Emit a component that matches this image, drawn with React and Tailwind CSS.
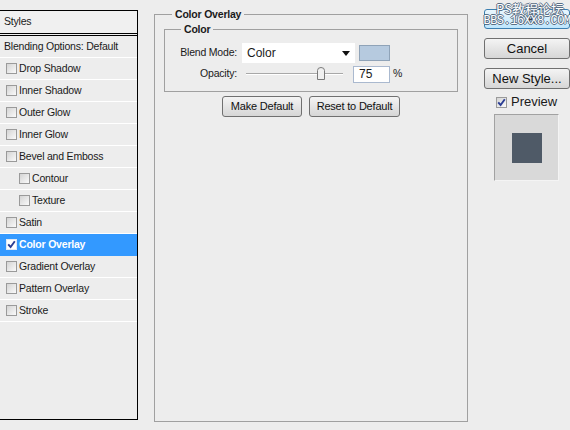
import React from "react";

const Box = ({ checked, light }) => (
  <span
    className={
      "w-[11px] h-[11px] border flex items-center justify-center shrink-0 " +
      (light
        ? "border-[#dfe8f5] bg-white"
        : "border-[#9a9a9a] bg-linear-to-br from-[#d4d4d4] to-[#fafafa]")
    }
  >
    {checked && (
      <svg width="9" height="9" viewBox="0 0 9 9">
        <path d="M1.2 4.3 L3.6 7 L7.8 1.3" stroke="#2a3d94" strokeWidth="1.9" fill="none" />
      </svg>
    )}
  </span>
);

const styleRows = [
  { label: "Drop Shadow" },
  { label: "Inner Shadow" },
  { label: "Outer Glow" },
  { label: "Inner Glow" },
  { label: "Bevel and Emboss" },
  { label: "Contour", indent: true },
  { label: "Texture", indent: true },
  { label: "Satin" },
  { label: "Color Overlay", active: true },
  { label: "Gradient Overlay" },
  { label: "Pattern Overlay" },
  { label: "Stroke" },
];

const GrayButton = ({ children, className = "" }) => (
  <button
    className={
      "h-[21px] border border-[#707070] rounded-[3px] bg-linear-to-b from-[#f4f4f4] to-[#d6d6d6] text-[#111] leading-none " +
      className
    }
  >
    {children}
  </button>
);

export default function App() {
  return (
    <div className="w-[570px] h-[430px] bg-[#ededed] flex font-['Liberation_Sans',Arial,sans-serif] text-[10.5px] tracking-[-0.2px] text-[#1a1a1a] overflow-hidden">
      {/* styles list */}
      <div className="mt-[10px] w-[138px] h-[410px] border-t border-r border-b border-black flex flex-col">
        <div className="h-[25px] shrink-0 flex items-center pl-[4px] bg-[#f0f0f0] border-b-[3px] border-double border-black">
          Styles
        </div>
        <div className="h-[22px] shrink-0 flex items-center pl-[4px] border-b border-white">
          Blending Options: Default
        </div>
        {styleRows.map((r) => (
          <div
            key={r.label}
            className={
              "h-[22px] shrink-0 flex items-center gap-[2px] border-b " +
              (r.indent ? "pl-[19px] " : "pl-[6px] ") +
              (r.active ? "bg-[#3399ff] text-white font-bold border-[#3399ff]" : "border-white")
            }
          >
            <Box checked={r.active} light={r.active} />
            <span>{r.label}</span>
          </div>
        ))}
      </div>

      {/* center group */}
      <fieldset className="ml-[16px] mt-[8px] w-[314px] h-[414px] border border-[#a0a0a0] px-[9px]">
        <legend className="ml-[8px] px-[3px] font-bold leading-[12px]">Color Overlay</legend>
        <fieldset className="mt-[3px] border border-[#a0a0a0] h-[69px]">
          <legend className="ml-[16px] px-[3px] font-bold leading-[12px]">Color</legend>
          <div className="mt-[8px] flex items-center h-[20px]">
            <span className="w-[72px] text-right">Blend Mode:</span>
            <div className="ml-[5px] w-[113px] h-[20px] bg-white flex items-center justify-between px-[5px]">
              <span className="text-[12px] tracking-normal">Color</span>
              <svg width="8" height="5" viewBox="0 0 8 5">
                <path d="M0 0 H8 L4 5 Z" fill="#111" />
              </svg>
            </div>
            <div className="ml-[4px] w-[31px] h-[16px] bg-[#b6cadf] border border-[#8fa3b8]" />
          </div>
          <div className="mt-[2px] flex items-center h-[18px]">
            <span className="w-[72px] text-right">Opacity:</span>
            <div className="ml-[9px] w-[97px] h-[16px] relative flex items-center">
              <div className="w-full h-[2px] border-t border-[#a8a8a8] border-b border-b-white" />
              <svg className="absolute left-[71px] top-[1px]" width="8" height="13" viewBox="0 0 8 13">
                <path d="M0.5 12.5 V3.5 Q0.5 0.5 4 0.5 Q7.5 0.5 7.5 3.5 V12.5 Z" fill="#f0f0f0" stroke="#7a7a7a" />
              </svg>
            </div>
            <div className="ml-[10px] w-[37px] h-[17px] bg-white border border-[#aab9cf] flex items-center pl-[5px] text-[12px] tracking-normal">
              75
            </div>
            <span className="ml-[3px]">%</span>
          </div>
        </fieldset>
        <div className="mt-[4px] flex justify-center gap-[7px]">
          <GrayButton className="w-[80px] text-[11px]">Make Default</GrayButton>
          <GrayButton className="w-[91px] text-[11px]">Reset to Default</GrayButton>
        </div>
      </fieldset>

      {/* right column */}
      <div className="ml-[16px] w-[86px] flex flex-col pt-[9px] text-[13px] tracking-normal">
        <div className="relative">
          <button className="w-[86px] h-[20px] rounded-[3px] border border-[#3c7fb1] bg-linear-to-b from-[#eaf6fd] to-[#bee6fd] text-[#333] leading-none">
            OK
          </button>
          <div className="absolute left-0 -top-[7px] w-[86px] flex flex-col items-center text-white [text-shadow:1px_0_#5a6f86,-1px_0_#5a6f86,0_1px_#5a6f86,0_-1px_#5a6f86]">
            <span className="text-[13px] leading-[13px] pl-[6px] font-['Noto_Sans_CJK_SC',sans-serif]">PS教程论坛</span>
            <span className="text-[12px] leading-[12px] tracking-[-0.5px] font-['Liberation_Mono',monospace]">BBS.16XX8.COM</span>
          </div>
        </div>
        <GrayButton className="mt-[9px] w-[86px] h-[20px] text-[13px]">Cancel</GrayButton>
        <GrayButton className="mt-[9px] w-[86px] h-[20px] text-[13px]">New Style...</GrayButton>
        <div className="mt-[6px] flex items-center gap-[4px] pl-[12px] h-[14px]">
          <Box checked />
          <span>Preview</span>
        </div>
        <div className="mt-[5px] ml-[10px] w-[65px] h-[67px] bg-[#d9d9d9] border border-t-[#a2a2a2] border-l-[#a2a2a2] border-r-[#f4f4f4] border-b-[#f4f4f4] flex items-center justify-center">
          <div className="w-[30px] h-[30px] bg-[#4f5a67]" />
        </div>
      </div>
    </div>
  );
}
